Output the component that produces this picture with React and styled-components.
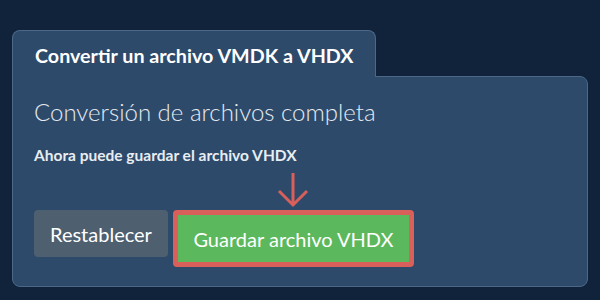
import React from "react";
import styled, { createGlobalStyle } from "styled-components";

const Global = createGlobalStyle`
  html, body {
    margin: 0;
    background: #10233a;
  }
  body {
    font-family: Lato, "Open Sans", sans-serif;
  }
`;

const Page = styled.div`
  width: 600px;
  height: 300px;
  box-sizing: border-box;
  padding: 30px 12px 0 12px;
`;

const Tab = styled.div`
  width: 364px;
  height: 47px;
  box-sizing: border-box;
  background: #2d4a6b;
  border: 1px solid #4b6889;
  border-bottom: none;
  border-radius: 8px 8px 0 0;
  color: #ffffff;
  font-weight: 700;
  font-size: 19.7px;
  padding: 13px 0 0 22px;
  position: relative;
  z-index: 1;
  margin-bottom: -1px;
`;

const Panel = styled.div`
  width: 576px;
  height: 211px;
  box-sizing: border-box;
  background: #2d4a6b;
  border: 1px solid #4b6889;
  border-radius: 0 8px 8px 8px;
  padding: 20px 21px 0 21px;
  color: #ffffff;
`;

const Heading = styled.div`
  font-size: 24px;
  font-weight: 300;
  color: #e6ebf1;
  line-height: 30px;
`;

const Note = styled.div`
  margin-top: 19px;
  font-size: 15.5px;
  line-height: 19px;
  font-weight: 700;
  color: #e8edf2;
`;

const Actions = styled.div`
  display: flex;
  align-items: flex-start;
  gap: 5px;
  margin-top: 45px;
`;

const Button = styled.button`
  border: none;
  font-family: Lato, "Open Sans", sans-serif;
  font-size: 20px;
  color: #ffffff;
  height: 47px;
  padding: 0 ${(p) => (p.$primary ? "15.5px" : "16px")};
  background: ${(p) => (p.$primary ? "#5cb85c" : "#4e5f70")};
  border-radius: ${(p) => (p.$primary ? "0" : "4px")};
  cursor: pointer;
`;

const Highlight = styled.div`
  position: relative;
  border: 5px solid #d9605a;
  border-radius: 4px;
  display: flex;
`;

const Arrow = styled.svg`
  position: absolute;
  left: 99px;
  top: -43px;
`;

export default function App() {
  return (
    <Page>
      <Global />
      <Tab>Convertir un archivo VMDK a VHDX</Tab>
      <Panel>
        <Heading>Conversión de archivos completa</Heading>
        <Note>Ahora puede guardar el archivo VHDX</Note>
        <Actions>
          <Button>Restablecer</Button>
          <Highlight>
            <Arrow width="32" height="36" viewBox="0 0 32 36">
              <path d="M16 1 V33 M2 19 L16 33 L30 19" fill="none" stroke="#d9605a" strokeWidth="3" />
            </Arrow>
            <Button $primary>Guardar archivo VHDX</Button>
          </Highlight>
        </Actions>
      </Panel>
    </Page>
  );
}
